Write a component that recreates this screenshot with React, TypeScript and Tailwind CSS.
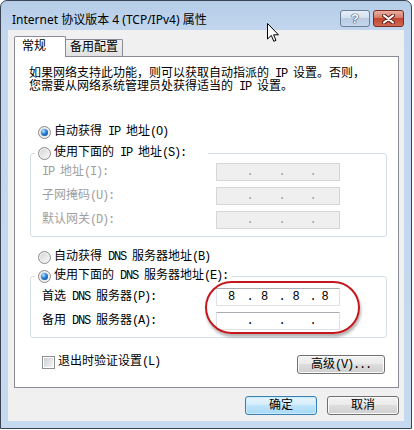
import React from "react";

const sim = "font-['Liberation_Mono','Noto_Sans_CJK_SC',monospace] text-[12px]";

// SimSun draws Latin at half the CJK width; squeeze the mono runs to 6px per char
function T({ children }: { children: string }) {
  const parts = children.split(/([\x00-\x7F]+)/).filter(Boolean);
  return (
    <>
      {parts.map((p, i) =>
        /^[\x00-\x7F]+$/.test(p) ? (
          <span key={i} className="tracking-[-1.2px]">
            {p}
          </span>
        ) : (
          <React.Fragment key={i}>{p}</React.Fragment>
        )
      )}
    </>
  );
}

function Radio({ checked }: { checked?: boolean }) {
  return (
    <span className="flex size-[13px] shrink-0 items-center justify-center rounded-full border border-[#8c8c8c] bg-[linear-gradient(135deg,#d2d2d2,#fbfbfb)] shadow-[inset_0_0_0_1px_#f2f2f2]">
      {checked && (
        <span className="size-[7px] rounded-full bg-[radial-gradient(circle_at_35%_30%,#b9e5ff,#2a7ed6_45%,#0b3a86)]" />
      )}
    </span>
  );
}

function RadioLabel({ checked, children }: { checked?: boolean; children: string }) {
  return (
    <div className="flex h-[16px] items-center gap-[3px] whitespace-nowrap">
      <Radio checked={checked} />
      <span className="leading-[16px]">
        <T>{children}</T>
      </span>
    </div>
  );
}

function IpField({ values, disabled }: { values?: string[]; disabled?: boolean }) {
  const segs = values ?? ["", "", "", ""];
  return (
    <div
      className={`grid h-[18px] w-[124px] grid-cols-[32px_2px_30px_2px_29px_2px_25px] items-center border leading-[16px] ${
        disabled
          ? "border-[#d6d6d6] bg-[#efefef] text-[#a0a0a0]"
          : "border-[#dfe3e8] border-t-[#abadb3] bg-white text-black"
      }`}
    >
      {segs.map((v, i) => (
        <React.Fragment key={i}>
          <span className="pr-[3px] text-center">{v}</span>
          {i < 3 && <span className="flex justify-center overflow-visible">.</span>}
        </React.Fragment>
      ))}
    </div>
  );
}

function FieldRow({ label, disabled, values }: { label: string; disabled?: boolean; values?: string[] }) {
  return (
    <div className="flex h-[18px] items-center">
      <span className={`w-[174px] whitespace-nowrap leading-[16px] ${disabled ? "text-[#a0a0a0]" : "text-black"}`}>
        <T>{label}</T>
      </span>
      <IpField values={values} disabled={disabled} />
    </div>
  );
}

function Button({ children, primary, className = "" }: { children: React.ReactNode; primary?: boolean; className?: string }) {
  return (
    <div
      className={`flex h-[19px] items-center justify-center rounded-[3px] border leading-[16px] ${
        primary
          ? "border-[#3c7fb1] bg-[linear-gradient(#e5f4fc_0%,#d6eefb_45%,#bde4fa_50%,#a9d9f4_100%)] shadow-[inset_0_0_0_1px_#c8ecff]"
          : "border-[#707070] bg-[linear-gradient(#f2f2f2_0%,#ebebeb_45%,#dddddd_50%,#cfcfcf_100%)] shadow-[inset_0_0_0_1px_#fbfbfb]"
      } ${className}`}
    >
      {children}
    </div>
  );
}

export default function App() {
  return (
    <div className="h-[430px] w-[414px] bg-white">
      <div className="relative flex h-[429px] w-[412px] flex-col rounded-t-[7px] border border-[#3a4453] bg-[linear-gradient(#b6cde8,#c2d6ee_30px,#c5d9ef)]">
        {/* title bar */}
        <div className="flex h-[29px] items-start justify-between">
          <span className="ml-[11px] mt-[11px] font-['Noto_Sans','Noto_Sans_CJK_SC',sans-serif] text-[12px] leading-[16px] text-black">
            Internet 协议版本 4 (TCP/IPv4) 属性
          </span>
          <div className="mr-[7px] mt-[9px] flex gap-[3px]">
            <div className="flex h-[17px] w-[30px] items-center justify-center rounded-[3px] border border-[#6b7f99] bg-[linear-gradient(#e6eef7_0%,#d3e0ef_45%,#b8cbe2_50%,#c7d8ec_100%)]">
              <span className="font-['Liberation_Sans',sans-serif] text-[13px] font-bold leading-none text-white [text-shadow:0_0_1px_#2a3c57,0_0_1px_#2a3c57,0_0_1px_#2a3c57]">
                ?
              </span>
            </div>
            <div className="flex h-[17px] w-[31px] items-center justify-center rounded-[3px] border border-[#7a2b22] bg-[linear-gradient(#eab0a2_0%,#d77a68_45%,#c2462f_50%,#cf6a52_100%)]">
              <svg width="13" height="10" viewBox="0 0 13 10">
                <path d="M2 1.5 L11 8.5 M11 1.5 L2 8.5" stroke="#5b1d15" strokeWidth="4" strokeLinecap="round" />
                <path d="M2 1.5 L11 8.5 M11 1.5 L2 8.5" stroke="#ffffff" strokeWidth="2.2" strokeLinecap="round" />
              </svg>
            </div>
          </div>
        </div>

        {/* client area */}
        <div className={`mx-[7px] mb-[7px] flex flex-1 flex-col bg-[#f0f0f0] pl-[6px] pr-[5px] text-black ${sim}`}>
          <div className="flex h-[26px] items-end">
            <div className="relative z-10 -mb-px h-[21px] w-[52px] rounded-t-[2px] border border-b-0 border-[#898c95] bg-white pl-[7px] pt-[2px] leading-[16px]">
              常规
            </div>
            <div className="-ml-px h-[17px] w-[58px] rounded-t-[2px] border border-b-0 border-[#898c95] bg-[linear-gradient(#f3f3f3,#e1e1e1)] text-center leading-[16px]">
              备用配置
            </div>
          </div>

          <div className="relative flex h-[332px] flex-col border border-[#898c95] bg-white">
            <p className="mt-[11px] whitespace-nowrap pl-[14px] leading-[13px]">
              <T>如果网络支持此功能，则可以获取自动指派的 IP 设置。否则，</T>
              <br />
              <T>您需要从网络系统管理员处获得适当的 IP 设置。</T>
            </p>

            <div className="ml-[23px] mt-[30px]">
              <RadioLabel checked>自动获得 IP 地址(O)</RadioLabel>
            </div>

            <fieldset className="ml-[15px] mr-[11px] mt-[5px] rounded-[3px] border border-[#d5dfe5] pb-[7px] pl-[11px]">
              <legend className="-ml-[7px] pl-[3px] pr-[22px]">
                <RadioLabel>使用下面的 IP 地址(S):</RadioLabel>
              </legend>
              <div className="flex flex-col gap-[6px] pt-[2px]">
                <FieldRow label="IP 地址(I):" disabled />
                <FieldRow label="子网掩码(U):" disabled />
                <FieldRow label="默认网关(D):" disabled />
              </div>
            </fieldset>

            <div className="ml-[23px] mt-[12px]">
              <RadioLabel>自动获得 DNS 服务器地址(B)</RadioLabel>
            </div>

            <fieldset className="ml-[15px] mr-[11px] mt-[3px] rounded-[3px] border border-[#d5dfe5] pb-[7px] pl-[11px]">
              <legend className="-ml-[7px] pl-[3px] pr-[4px]">
                <RadioLabel checked>使用下面的 DNS 服务器地址(E):</RadioLabel>
              </legend>
              <div className="flex flex-col gap-[6px] pt-[4px]">
                <FieldRow label="首选 DNS 服务器(P):" values={["8", "8", "8", "8"]} />
                <FieldRow label="备用 DNS 服务器(A):" />
              </div>
            </fieldset>

            <div className="ml-[27px] mr-[13px] mt-[17px] flex items-start justify-between">
              <div className="flex h-[14px] items-center gap-[3px] whitespace-nowrap">
                <span className="flex size-[13px] items-center justify-center border border-[#8e8f8f] bg-white">
                  <span className="size-[9px] bg-[linear-gradient(135deg,#cbcfd5,#f6f6f6)]" />
                </span>
                <span className="leading-[16px]">
                  <T>退出时验证设置(L)</T>
                </span>
              </div>
              <Button className="w-[88px]">
                <T>高级(V)...</T>
              </Button>
            </div>

            {/* red highlight drawn over the DNS fields */}
            <div className="pointer-events-none absolute left-[190px] top-[224px] h-[53px] w-[155px] rounded-[27px] border-2 border-[#c4161c] shadow-[1px_3px_3px_rgba(0,0,0,0.3)]" />
          </div>

          <div className="mt-[8px] flex justify-end gap-[10px]">
            <Button primary className="w-[72px]">
              确定
            </Button>
            <Button className="w-[72px]">取消</Button>
          </div>
        </div>

        {/* mouse pointer */}
        <svg className="absolute left-[266px] top-[22px]" width="13" height="20" viewBox="0 0 13 20">
          <path d="M0.5 0.5 V16 L4.3 12.4 L6.8 18.3 L9 17.4 L6.6 11.8 H11.5 Z" fill="white" stroke="black" strokeLinejoin="round" />
        </svg>
      </div>
    </div>
  );
}
